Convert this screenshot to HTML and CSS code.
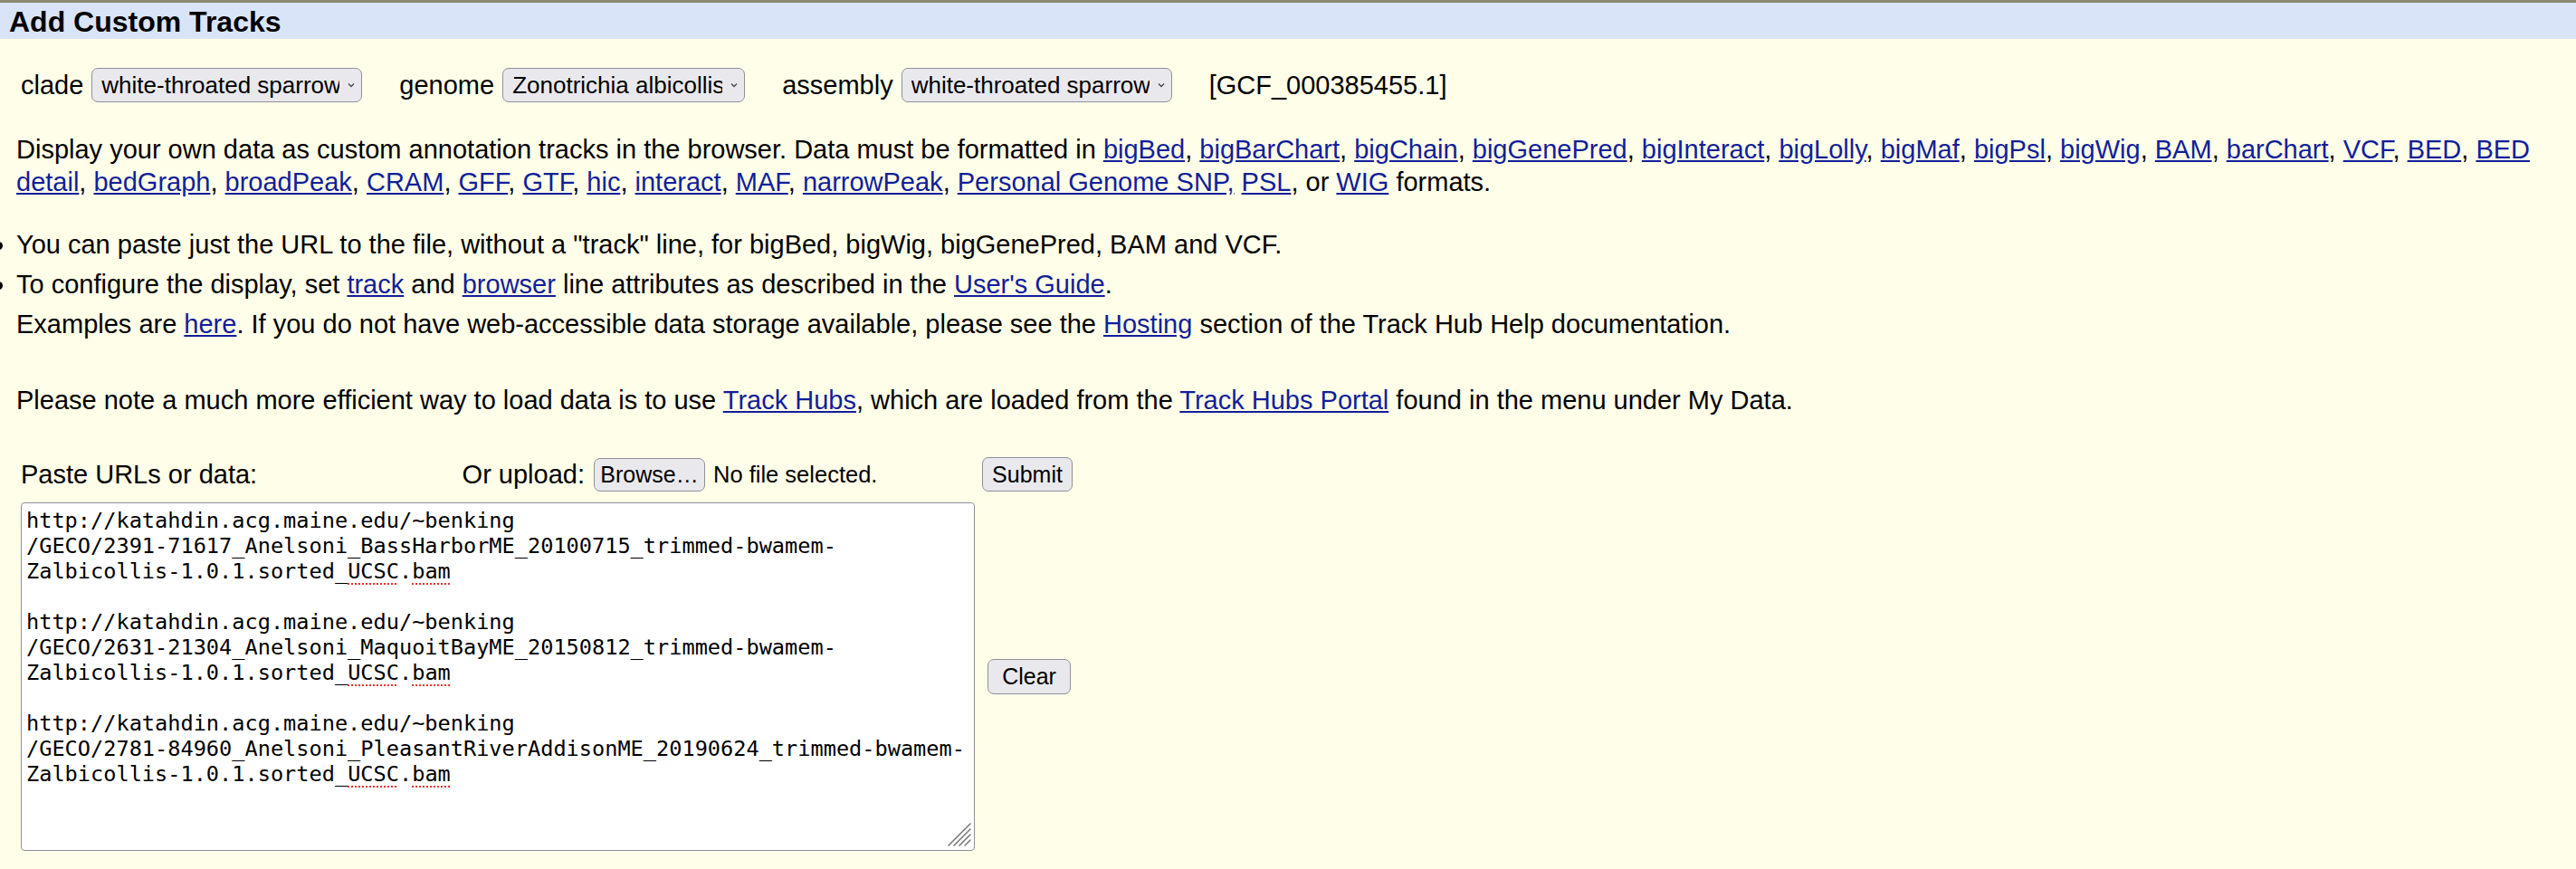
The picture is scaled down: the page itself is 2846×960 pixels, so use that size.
FILE: index.html
```html
<!DOCTYPE html>
<html lang="en">
<head>
<meta charset="utf-8">
<title>Add Custom Tracks</title>
<link rel="stylesheet" href="styles.css">
</head>
<body>
<div class="titlebar">Add Custom Tracks</div>

<div class="db-row">
  <span class="lbl">clade</span>
  <span class="sel-wrap sel-wide">
    <select class="sel"><option>white-throated sparrow</option></select>
    <svg class="chev" width="8" height="6" viewBox="0 0 8 6"><polyline points="1,1.5 4,4.5 7,1.5" fill="none" stroke="#444" stroke-width="1.3"/></svg>
  </span>
  <span class="lbl">genome</span>
  <span class="sel-wrap sel-genome">
    <select class="sel"><option>Zonotrichia albicollis</option></select>
    <svg class="chev" width="8" height="6" viewBox="0 0 8 6"><polyline points="1,1.5 4,4.5 7,1.5" fill="none" stroke="#444" stroke-width="1.3"/></svg>
  </span>
  <span class="lbl">assembly</span>
  <span class="sel-wrap sel-wide">
    <select class="sel"><option>white-throated sparrow</option></select>
    <svg class="chev" width="8" height="6" viewBox="0 0 8 6"><polyline points="1,1.5 4,4.5 7,1.5" fill="none" stroke="#444" stroke-width="1.3"/></svg>
  </span>
  <span class="lbl accession">[GCF_000385455.1]</span>
</div>

<p class="intro">Display your own data as custom annotation tracks in the browser. Data must be formatted in <a href="#">bigBed</a>, <a href="#">bigBarChart</a>, <a href="#">bigChain</a>, <a href="#">bigGenePred</a>, <a href="#">bigInteract</a>, <a href="#">bigLolly</a>, <a href="#">bigMaf</a>, <a href="#">bigPsl</a>, <a href="#">bigWig</a>, <a href="#">BAM</a>, <a href="#">barChart</a>, <a href="#">VCF</a>, <a href="#">BED</a>, <a href="#">BED</a> <a href="#">detail</a>, <a href="#">bedGraph</a>, <a href="#">broadPeak</a>, <a href="#">CRAM</a>, <a href="#">GFF</a>, <a href="#">GTF</a>, <a href="#">hic</a>, <a href="#">interact</a>, <a href="#">MAF</a>, <a href="#">narrowPeak</a>, <a href="#">Personal Genome SNP,</a> <a href="#">PSL</a>, or <a href="#">WIG</a> formats.</p>

<ul class="tips">
  <li>You can paste just the URL to the file, without a "track" line, for bigBed, bigWig, bigGenePred, BAM and VCF.</li>
  <li>To configure the display, set <a href="#">track</a> and <a href="#">browser</a> line attributes as described in the <a href="#">User's Guide</a>.</li>
  <li class="plain">Examples are <a href="#">here</a>. If you do not have web-accessible data storage available, please see the <a href="#">Hosting</a> section of the Track Hub Help documentation.</li>
</ul>

<p class="note">Please note a much more efficient way to load data is to use <a href="#">Track Hubs</a>, which are loaded from the <a href="#">Track Hubs Portal</a> found in the menu under My Data.</p>

<form class="paste" onsubmit="return false">
  <div class="paste-head">
    <span class="lbl">Paste URLs or data:</span>
    <span class="upload">
      <span class="lbl">Or upload:</span>
      <button type="button" class="btn btn-browse">Browse…</button>
      <span class="file-status">No file selected.</span>
    </span>
  </div>
  <div class="btn-cell"><button type="submit" class="btn btn-submit">Submit</button></div>
  <div class="paste-area" role="textbox" aria-multiline="true">
<pre class="paste-text">http://katahdin.acg.maine.edu/~benking
/GECO/2391-71617_Anelsoni_BassHarborME_20100715_trimmed-bwamem-
Zalbicollis-1.0.1.sorted_<span class="miss">UCSC</span>.<span class="miss">bam</span>

http://katahdin.acg.maine.edu/~benking
/GECO/2631-21304_Anelsoni_MaquoitBayME_20150812_trimmed-bwamem-
Zalbicollis-1.0.1.sorted_<span class="miss">UCSC</span>.<span class="miss">bam</span>

http://katahdin.acg.maine.edu/~benking
/GECO/2781-84960_Anelsoni_PleasantRiverAddisonME_20190624_trimmed-bwamem-
Zalbicollis-1.0.1.sorted_<span class="miss">UCSC</span>.<span class="miss">bam</span></pre>
    <svg class="grip" width="26" height="26" viewBox="0 0 26 26"><g stroke="#7a7a7a" stroke-width="1.6" stroke-linecap="round"><line x1="1" y1="25" x2="25" y2="1"/><line x1="7" y1="25" x2="25" y2="7"/><line x1="13" y1="25" x2="25" y2="13"/><line x1="19" y1="25" x2="25" y2="19"/></g></svg>
  </div>
  <div class="btn-cell btn-cell-mid"><button type="button" class="btn btn-clear">Clear</button></div>
</form>
</body>
</html>
```

FILE: styles.css
```css
html, body {
  margin: 0;
  padding: 0;
}

body {
  background: #fffee8;
  color: #000;
  font-family: "Liberation Sans", Arial, Helvetica, sans-serif;
  font-size: 29px;
  overflow: hidden;
}

a {
  color: #121e9a;
  text-decoration: underline;
}

.titlebar {
  border-top: 3px solid #8c8a72;
  background: #d9e4f8;
  height: 40px;
  line-height: 42px;
  padding-left: 10px;
  font-size: 32px;
  font-weight: bold;
  white-space: nowrap;
}

.db-row {
  display: flex;
  align-items: center;
  height: 38px;
  margin-top: 32px;
  padding-left: 23px;
}

.lbl {
  font-size: 29px;
  white-space: nowrap;
}

.db-row .lbl {
  margin-right: 9px;
}

.sel-wrap {
  position: relative;
  display: inline-block;
  height: 38px;
  margin-right: 41px;
}

.sel-wide { width: 299px; }
.sel-genome { width: 268px; }

.sel {
  appearance: none;
  -webkit-appearance: none;
  box-sizing: border-box;
  width: 100%;
  height: 38px;
  margin: 0;
  padding: 0 24px 0 10px;
  background: #e9e9ed;
  border: 1px solid #8f8f9d;
  border-radius: 7px;
  color: #000;
  font-family: "Liberation Sans", Arial, Helvetica, sans-serif;
  font-size: 26px;
}

.chev {
  position: absolute;
  right: 8px;
  top: 16px;
  pointer-events: none;
}

.intro {
  margin: 34px 18px 0 18px;
  line-height: 36px;
}

.tips {
  margin: 29px 0 0 18px;
  padding: 0;
  list-style: disc;
}

.tips li {
  line-height: 44px;
}

.tips li.plain {
  list-style: none;
}

.note {
  margin: 44px 0 0 18px;
  line-height: 36px;
}

.paste {
  display: grid;
  grid-template-columns: 1054px auto;
  column-gap: 8px;
  row-gap: 12px;
  margin: 45px 0 0 23px;
}

.paste-head {
  display: flex;
  align-items: center;
  justify-content: space-between;
  height: 38px;
}

.upload {
  display: flex;
  align-items: center;
}

.btn {
  box-sizing: border-box;
  margin: 0;
  padding: 0;
  background: #e9e9ed;
  border: 1px solid #8f8f9d;
  border-radius: 7px;
  color: #000;
  font-family: "Liberation Sans", Arial, Helvetica, sans-serif;
  font-size: 25px;
  text-align: center;
}

.btn-browse {
  width: 123px;
  height: 37px;
  margin-left: 10px;
}

.file-status {
  width: 289px;
  margin-left: 9px;
  font-size: 25.5px;
  white-space: nowrap;
}

.btn-submit {
  width: 100px;
  height: 38px;
}

.btn-cell-mid {
  align-self: center;
}

.btn-clear {
  width: 92px;
  height: 39px;
  margin-left: 6px;
}

.paste-area {
  position: relative;
  box-sizing: border-box;
  height: 385px;
  background: #fff;
  border: 1px solid #8f8f9d;
  border-radius: 4px;
  padding: 5px 5px;
  overflow: hidden;
}

.paste-text {
  margin: 0;
  font-family: "DejaVu Sans Mono", "Liberation Mono", monospace;
  font-size: 23.6px;
  line-height: 28px;
  white-space: pre;
  color: #000;
}

.miss {
  text-decoration: underline dotted #e3322b;
  text-decoration-thickness: 2px;
  text-underline-offset: 5px;
}

.grip {
  position: absolute;
  right: 3px;
  bottom: 4px;
}
```
